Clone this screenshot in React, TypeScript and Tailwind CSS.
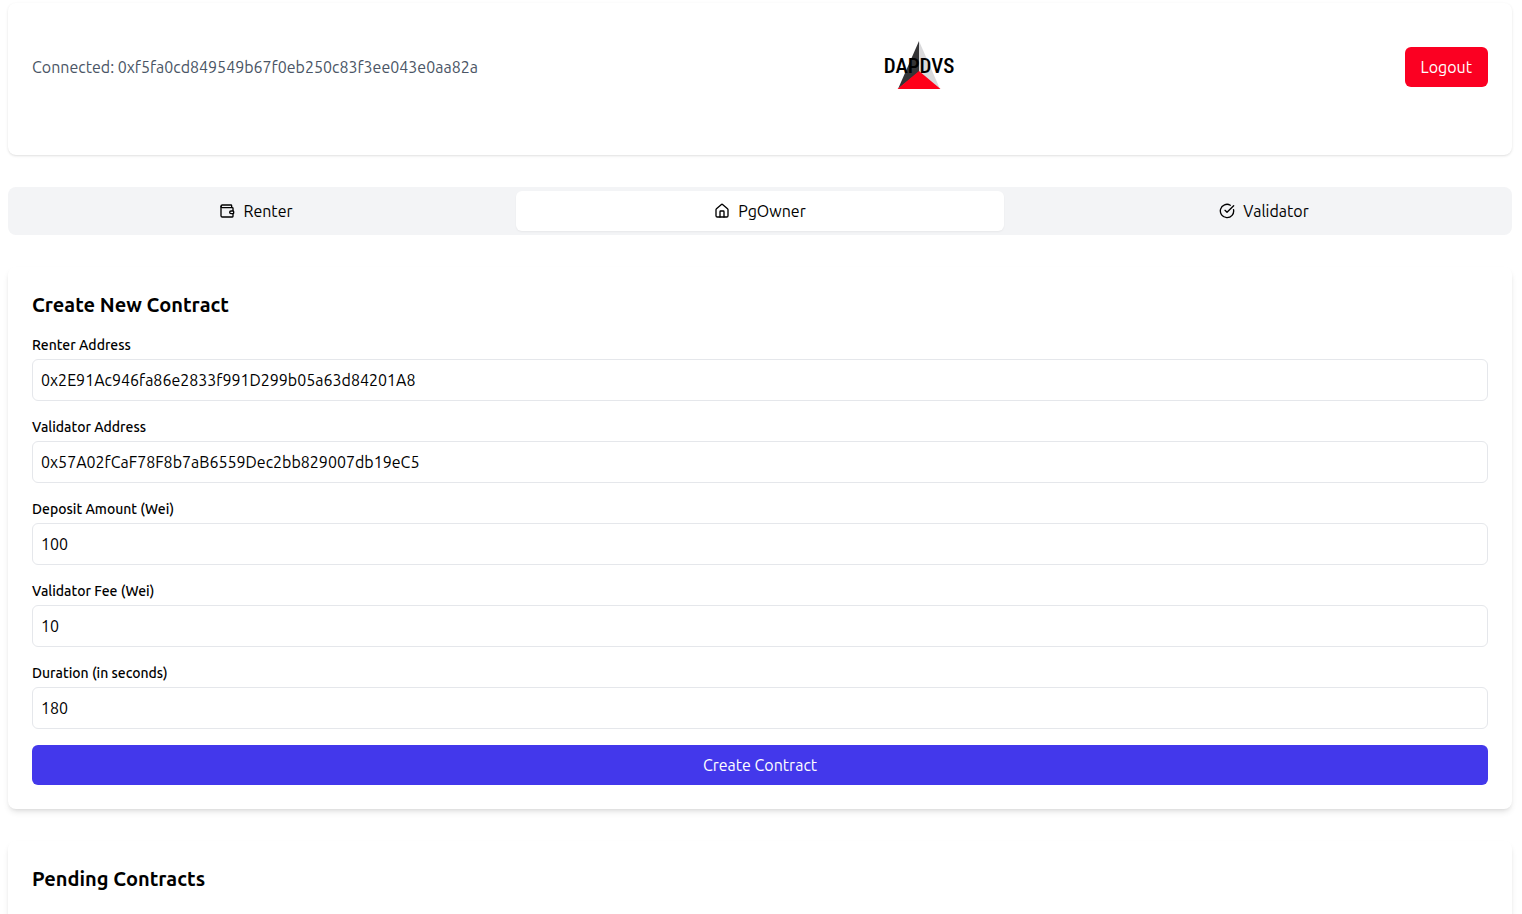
import { useState } from "react";
import type { ReactNode } from "react";
import { CircleCheckBig, House, Wallet } from "lucide-react";
import type { LucideIcon } from "lucide-react";

const TABS: { name: string; icon: LucideIcon }[] = [
  { name: "Renter", icon: Wallet },
  { name: "PgOwner", icon: House },
  { name: "Validator", icon: CircleCheckBig },
];

const FIELDS = [
  { id: "renter", label: "Renter Address", type: "text", value: "0x2E91Ac946fa86e2833f991D299b05a63d84201A8" },
  { id: "validator", label: "Validator Address", type: "text", value: "0x57A02fCaF78F8b7aB6559Dec2bb829007db19eC5" },
  { id: "deposit", label: "Deposit Amount (Wei)", type: "number", value: "100" },
  { id: "fee", label: "Validator Fee (Wei)", type: "number", value: "10" },
  { id: "duration", label: "Duration (in seconds)", type: "number", value: "180" },
];

function Logo() {
  return (
    <svg width="120" height="80" viewBox="0 0 120 80" role="img" aria-label="DAPDVS">
      <path d="M38 14 L38 45 L17 62 Z" fill="#343436" />
      <path d="M38 14 L38 45 L59 62 Z" fill="#d9d9db" />
      <path d="M38 44 L59.500 62 L16.500 62 Z" fill="#ff0019" />
      <text
        x="38"
        y="46"
        textAnchor="middle"
        fontSize="21"
        fontWeight="500"
        fontFamily="'Roboto Condensed', Roboto, 'Liberation Sans', sans-serif"
        fill="#000"
      >
        DAPDVS
      </text>
    </svg>
  );
}

function Card({ title, children }: { title: string; children?: ReactNode }) {
  return (
    <section className="rounded-lg bg-white p-6 shadow-md">
      <h2 className="mb-4 text-xl font-bold">{title}</h2>
      {children}
    </section>
  );
}

export default function App() {
  const [active, setActive] = useState("PgOwner");

  return (
    <div className="flex flex-col gap-8 bg-white pt-[3px] pr-[10px] pl-2 font-['Ubuntu','Noto_Sans',sans-serif] text-base text-black">
      <header className="rounded-lg bg-white p-6 shadow-sm">
        <div className="mb-6 flex items-center justify-between">
          <p className="text-gray-600">Connected: 0xf5fa0cd849549b67f0eb250c83f3ee043e0aa82a</p>
          <Logo />
          <button type="button" className="rounded-md bg-[#fb0022] px-4 py-2 text-white">
            Logout
          </button>
        </div>
      </header>

      <nav className="grid grid-cols-3 gap-4 rounded-lg bg-gray-100 p-1">
        {TABS.map(({ name, icon: Icon }) => (
          <button
            key={name}
            type="button"
            onClick={() => setActive(name)}
            className={
              "flex items-center justify-center gap-2 rounded-md py-2 " +
              (active === name ? "bg-white shadow-xs" : "")
            }
          >
            <Icon size={16} aria-hidden="true" />
            {name}
          </button>
        ))}
      </nav>

      <Card title="Create New Contract">
        <form className="flex flex-col gap-4" onSubmit={(e) => e.preventDefault()}>
          {FIELDS.map((f) => (
            <div key={f.id} className="flex flex-col gap-1">
              <label htmlFor={f.id} className="text-sm font-medium">
                {f.label}
              </label>
              <input
                id={f.id}
                type={f.type}
                defaultValue={f.value}
                className="w-full rounded-md border border-gray-200 bg-white p-2"
              />
            </div>
          ))}
          <button type="submit" className="rounded-md bg-[#4338eb] py-2 text-white">
            Create Contract
          </button>
        </form>
      </Card>

      <Card title="Pending Contracts" />
    </div>
  );
}
